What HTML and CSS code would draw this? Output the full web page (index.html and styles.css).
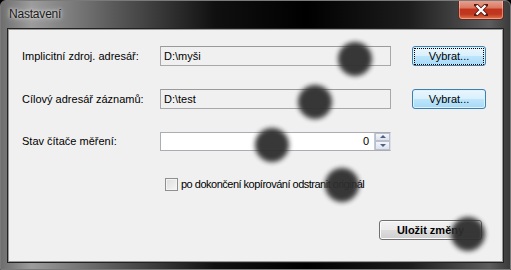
FILE: index.html
```html
<!DOCTYPE html>
<html>
<head>
    <title>Nastavení</title>
    <link rel="stylesheet" href="styles.css">
</head>
<body>
    <div class="window">
        <div class="titlebar">
            <span class="title">Nastavení</span>
            <div class="close-btn">
                <svg width="14" height="12" viewBox="0 0 14 12">
                    <path d="M2 1 L12 11 M12 1 L2 11" stroke="#5a1a10" stroke-width="4" stroke-linecap="square"/>
                    <path d="M2.5 1.5 L11.5 10.5 M11.5 1.5 L2.5 10.5" stroke="#fff" stroke-width="2.4"/>
                </svg>
            </div>
        </div>

        <div class="client">
            <div class="row row-first">
                <label class="label">Implicitní zdroj. adresář:</label>
                <div class="textbox readonly">D:\myši</div>
                <button class="btn btn-blue focused"><span>Vybrat...</span></button>
            </div>

            <div class="row row-second">
                <label class="label">Cílový adresář záznamů:</label>
                <div class="textbox readonly">D:\test</div>
                <button class="btn btn-blue"><span>Vybrat...</span></button>
            </div>

            <div class="row row-third">
                <label class="label">Stav čítače měření:</label>
                <div class="numeric">
                    <span class="value">0</span>
                    <div class="spin">
                        <div class="spin-part"><span class="arrow up"></span></div>
                        <div class="spin-part"><span class="arrow down"></span></div>
                    </div>
                </div>
            </div>

            <div class="check-row">
                <span class="checkbox"></span>
                <span class="check-label">po dokončení kopírování odstranit originál</span>
            </div>

            <div class="footer">
                <button class="btn btn-save">Uložit změny</button>
            </div>
        </div>

        <!-- cursor trail marks -->
        <div class="dot" style="left: 337px; top: 41px;"></div>
        <div class="dot" style="left: 297px; top: 84px;"></div>
        <div class="dot" style="left: 254px; top: 127px;"></div>
        <div class="dot" style="left: 324px; top: 167px;"></div>
        <div class="dot" style="left: 450px; top: 216px;"></div>
    </div>
</body>
</html>
```

FILE: styles.css
```css
body {
    margin: 0;
    background-color: #000;
    font-family: "Liberation Sans", Arial, sans-serif;
    font-size: 11px;
}
.window {
    position: relative;
    width: 511px;
    height: 270px;
    box-sizing: border-box;
    border: 1px solid #7a7a7a;
    border-radius: 6px 6px 0 0;
    background: linear-gradient(to right, #6e6e6e 0%, #9c9c9c 6%, #5a5a5a 22%, #101010 42%, #000 60%, #1c1c1c 80%, #5c5c5c 96%, #3a3a3a 100%);
    padding: 0 7px 7px 7px;
    display: flex;
    flex-direction: column;
    overflow: hidden;
}
.titlebar {
    height: 28px;
    position: relative;
    flex-shrink: 0;
}
.title {
    position: absolute;
    left: 1px;
    top: 6px;
    color: #1a1a1a;
    font-size: 12px;
    letter-spacing: -0.2px;
    text-shadow: 0 0 6px #e0e0e0, 0 0 3px #e8e8e8;
}
.close-btn {
    position: absolute;
    right: -1px;
    top: -1px;
    width: 44px;
    height: 19px;
    border: 1px solid #5e2a22;
    border-top: none;
    border-radius: 0 0 4px 4px;
    background: linear-gradient(to bottom, #e9a495 0%, #d97a62 40%, #c3321c 50%, #bf3820 75%, #e0764c 100%);
    box-shadow: inset 0 0 0 1px rgba(255, 210, 200, 0.5);
    display: flex;
    align-items: center;
    justify-content: center;
}
.client {
    flex: 1;
    background-color: #f0f0f0;
    border: 1px solid #9a9a9a;
    box-shadow: 0 0 0 1px #222;
    padding: 0 0 0 13px;
    display: flex;
    flex-direction: column;
    color: #000;
}
.row {
    display: flex;
    align-items: center;
    height: 20px;
}
.row-first {
    margin-top: 16px;
}
.row-second {
    margin-top: 23px;
}
.row-third {
    margin-top: 22px;
}
.label {
    width: 138px;
    flex-shrink: 0;
}
.textbox {
    width: 231px;
    height: 20px;
    box-sizing: border-box;
    border: 1px solid #a8a8a8;
    border-top-color: #9a9a9a;
    padding: 1px 3px;
    line-height: 16px;
}
.textbox.readonly {
    background-color: #f0f0f0;
}
.btn {
    font-family: inherit;
    font-size: 11px;
    height: 20px;
    box-sizing: border-box;
    padding: 0;
    color: #000;
    border-radius: 3px;
}
.btn-blue {
    margin-left: 21px;
    width: 74px;
    border: 1px solid #3c7fb1;
    background: linear-gradient(to bottom, #eaf6fd 0%, #d9f0fc 49%, #bee6fd 50%, #a7d9f5 100%);
    box-shadow: inset 0 0 0 1px #dff2fc;
}
.btn-blue span {
    display: inline-block;
    padding: 0 9px;
    line-height: 15px;
}
.btn-blue.focused span {
    outline: 1px dotted #000;
    outline-offset: 0;
    width: 50px;
}
.numeric {
    width: 231px;
    height: 19px;
    box-sizing: border-box;
    border: 1px solid #abadb3;
    border-right-color: #dbdfe6;
    background-color: #fff;
    display: flex;
    justify-content: flex-end;
    align-items: center;
}
.value {
    margin-right: 5px;
}
.spin {
    width: 15px;
    height: 17px;
    display: flex;
    flex-direction: column;
    border-left: 1px solid #c4c9d4;
}
.spin-part {
    flex: 1;
    display: flex;
    align-items: center;
    justify-content: center;
    background: linear-gradient(to bottom, #f4f6fa, #dde2ec);
    border: 1px solid #b8c0d0;
    box-sizing: border-box;
}
.arrow {
    width: 0;
    height: 0;
    border-left: 3px solid transparent;
    border-right: 3px solid transparent;
}
.arrow.up {
    border-bottom: 3px solid #4d6185;
}
.arrow.down {
    border-top: 3px solid #4d6185;
}
.check-row {
    display: flex;
    align-items: center;
    margin-top: 26px;
    padding-left: 143px;
    height: 14px;
}
.checkbox {
    width: 11px;
    height: 11px;
    border: 1px solid #8e8f8f;
    background: linear-gradient(135deg, #dcdcdc, #f6f6f6);
    box-shadow: inset 0 0 0 1px #f4f4f4;
    margin-right: 3px;
}
.check-label {
    line-height: 14px;
    letter-spacing: -0.5px;
}
.footer {
    display: flex;
    justify-content: flex-end;
    margin-top: 29px;
    padding-right: 20px;
}
.btn-save {
    width: 103px;
    font-weight: bold;
    border: 1px solid #707070;
    background: linear-gradient(to bottom, #f2f2f2 0%, #ebebeb 49%, #dddddd 50%, #cfcfcf 100%);
    box-shadow: inset 0 0 0 1px #fcfcfc;
}
.dot {
    position: absolute;
    width: 34px;
    height: 34px;
    border-radius: 50%;
    background-color: #2e2e2e;
    filter: blur(2.5px);
    opacity: 0.95;
}
```
